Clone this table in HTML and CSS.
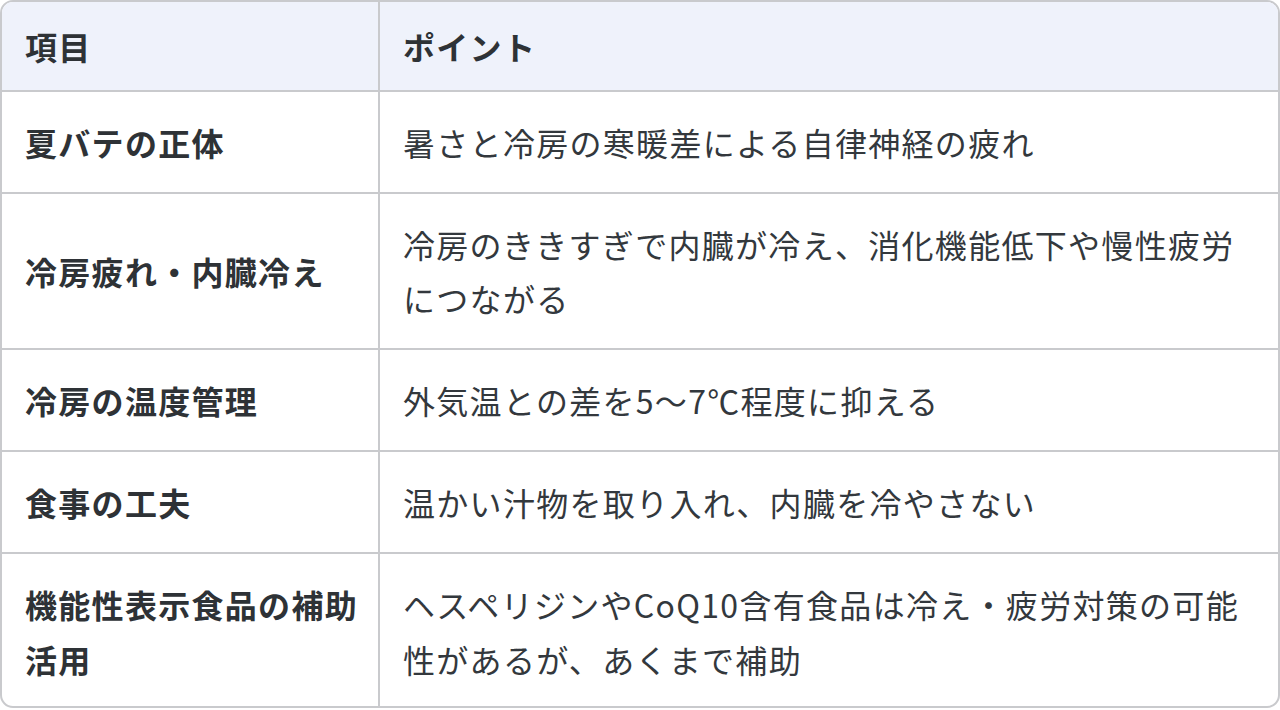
FILE: index.html
```html
<!DOCTYPE html>
<html lang="ja">
<head>
<meta charset="utf-8">
<title>夏バテ対策</title>
<link rel="stylesheet" href="styles.css">
</head>
<body>
<div class="table-wrap">
  <table class="info-table">
    <colgroup>
      <col class="col-item">
      <col class="col-point">
    </colgroup>
    <thead>
      <tr>
        <th class="cell-item">項目</th>
        <th class="cell-point">ポイント</th>
      </tr>
    </thead>
    <tbody>
      <tr>
        <td class="cell-item">夏バテの正体</td>
        <td class="cell-point">暑さと冷房の寒暖差による自律神経の疲れ</td>
      </tr>
      <tr>
        <td class="cell-item">冷房疲れ・内臓冷え</td>
        <td class="cell-point">冷房のききすぎで内臓が冷え、消化機能低下や慢性疲労につながる</td>
      </tr>
      <tr>
        <td class="cell-item">冷房の温度管理</td>
        <td class="cell-point">外気温との差を5〜7℃程度に抑える</td>
      </tr>
      <tr>
        <td class="cell-item">食事の工夫</td>
        <td class="cell-point">温かい汁物を取り入れ、内臓を冷やさない</td>
      </tr>
      <tr class="last-row">
        <td class="cell-item">機能性表示食品の補助活用</td>
        <td class="cell-point">ヘスペリジンやCoQ10含有食品は冷え・疲労対策の可能性があるが、あくまで補助</td>
      </tr>
    </tbody>
  </table>
</div>
</body>
</html>
```

FILE: styles.css
```css
html, body {
  margin: 0;
  padding: 0;
  background: #ffffff;
}

body {
  font-family: "Noto Sans CJK JP", "Noto Sans", sans-serif;
  color: #33383d;
}

.table-wrap {
  width: 1280px;
  height: 708px;
  box-sizing: border-box;
  border: 2px solid #c9cacd;
  border-radius: 13px;
  overflow: hidden;
}

.info-table {
  width: 100%;
  border-collapse: separate;
  border-spacing: 0;
  table-layout: fixed;
}

.col-item {
  width: 378px;
}

.info-table th,
.info-table td {
  font-size: 32px;
  line-height: 54.4px;
  letter-spacing: 1.3px;
  text-align: left;
  vertical-align: middle;
  border-bottom: 2px solid #c9cacd;
  box-sizing: border-box;
}

.info-table th {
  background: #eff2fb;
  font-weight: 700;
  color: #2e3236;
  padding: 16.8px 24px;
}

.info-table td {
  padding: 22.8px 24px;
  font-weight: 400;
}

.info-table .cell-item {
  border-right: 2px solid #c9cacd;
  padding-left: 23px;
  padding-right: 16px;
}

.info-table td.cell-item {
  font-weight: 700;
  color: #2e3236;
}

.info-table .cell-point {
  padding-left: 23px;
}

.last-row td {
  border-bottom: none;
}
```
